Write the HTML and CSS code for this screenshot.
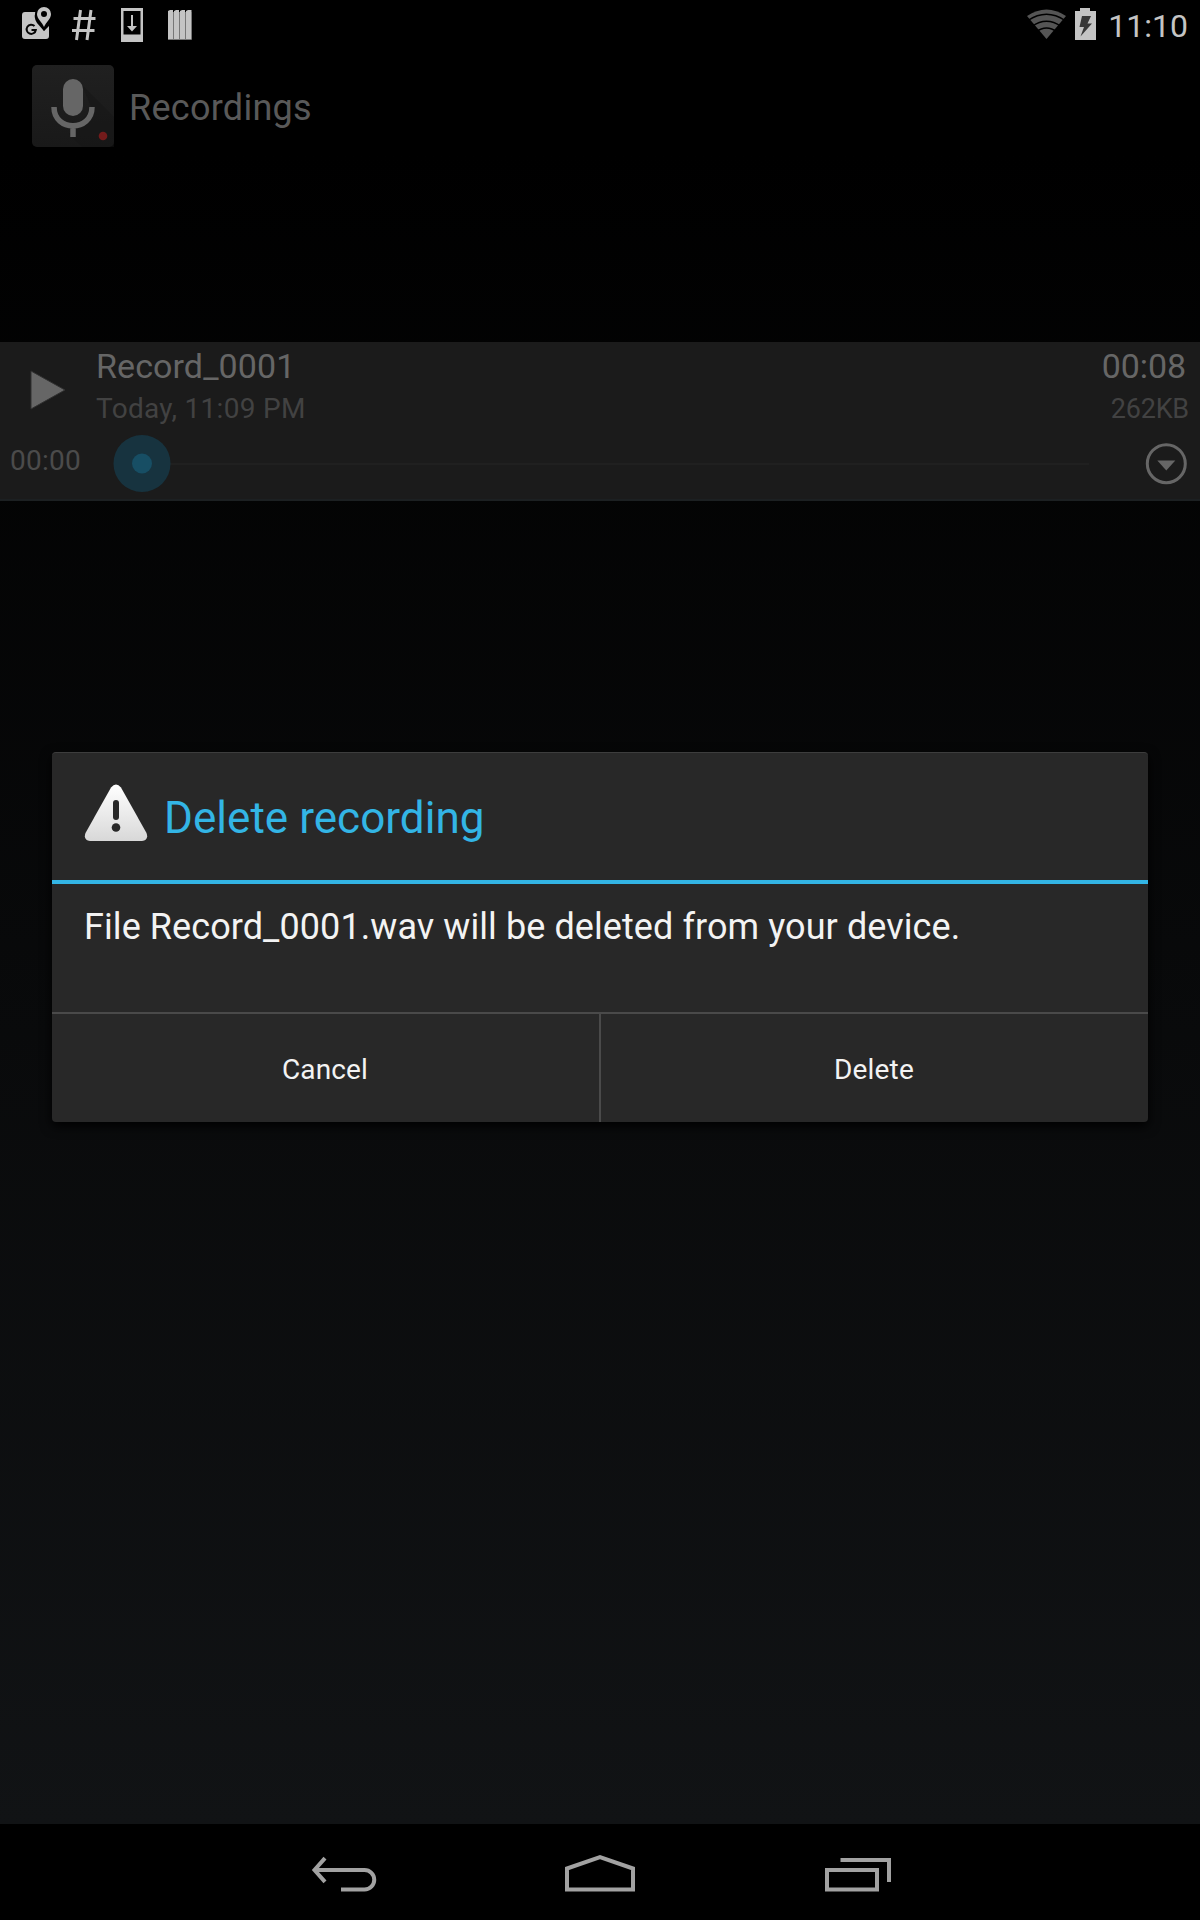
FILE: index.html
```html
<!DOCTYPE html>
<html lang="en">
<head>
<meta charset="utf-8">
<title>Recordings</title>
<link rel="stylesheet" href="styles.css">
</head>
<body>
<div class="screen">
  <header class="status-bar">
    <svg class="status-icons" width="200" height="50" viewBox="0 0 200 50">
      <g fill="#c4c4c4">
        <path d="M25 12H36Q33 17 37 23L44 31L49 26V36Q49 39 46 39H25Q22 39 22 36V15Q22 12 25 12Z"/>
        <path fill="#000" d="M44 5A9 9 0 0 1 53 14C53 20 48 24 44 31C40 24 35 20 35 14A9 9 0 0 1 44 5Z"/>
        <path fill-rule="evenodd" d="M44 7A7 7 0 0 1 51 14C51 19 46 22 44 27C42 22 37 19 37 14A7 7 0 0 1 44 7ZM44 11A3 3 0 1 0 44 17A3 3 0 1 0 44 11Z"/>
        <path fill-rule="evenodd" d="M121 8H143V42H121ZM123.500 11V34.500H140.500V11Z"/>
        <path d="M131 15H133V26H137L132 31.500L127 26H131Z"/>
        <path d="M168 11L170 10H173V39H168ZM174 11L176 10H179V39H174ZM180 11L182 10H185V39H180ZM186 11L188 10H191.500V39H186Z"/>
      </g>
      <path d="M34.500 26A4.600 4.600 0 1 0 35.800 30H31.500" fill="none" stroke="#050505" stroke-width="2"/>
      <path d="M80.500 10L76.500 40M91 10L87 40M73.500 18.500H95.500M72 30.500H94.500" fill="none" stroke="#c4c4c4" stroke-width="3"/>
      <path d="M168 39.500H191.500V12M173.500 12V39M179.500 12V39M185.500 12V39" fill="none" stroke="#777" stroke-width="1"/>
    </svg>
    <div class="status-right">
      <svg width="72" height="50" viewBox="1026 0 72 50">
        <path d="M1027 16Q1046.500 3 1066 16L1046.500 39Z" fill="#555"/>
        <path d="M1028 20.500Q1046.500 8 1065 20.500M1032 26.500Q1046.500 16 1061 26.500M1036 32Q1046.500 24 1057 32" fill="none" stroke="#000" stroke-width="1.500"/>
        <path d="M1075 11H1080V8H1090V11H1096V40H1075Z" fill="#c4c4c4"/>
        <path d="M1082 16H1091L1087.500 23.500H1092L1080.500 36.500L1084 27H1079.500Z" fill="#383838"/>
      </svg>
      <span class="clock">11:10</span>
    </div>
  </header>
  <div class="action-bar">
    <svg class="app-icon" width="82" height="82" viewBox="0 0 82 82">
      <defs><linearGradient id="tile" x2="0" y2="1"><stop stop-color="#202020"/><stop offset="1" stop-color="#191919"/></linearGradient></defs>
      <rect width="82" height="82" rx="5" fill="url(#tile)"/>
      <path d="M50 20L82 52V82H50L37 69L60 44Z" fill="#151515" opacity=".5"/>
      <rect x="31" y="14" width="20" height="37" rx="10" fill="#666"/>
      <path d="M22 42C22 67 60 67 60 42M41 60V72" fill="none" stroke="#666" stroke-width="5.500"/>
      <circle cx="71" cy="71" r="4.300" fill="#731b1b"/>
    </svg>
    <h1 class="title">Recordings</h1>
  </div>
  <main class="content">
    <section class="recording">
      <div class="summary">
        <svg class="play" width="60" height="60" viewBox="0 0 60 60"><path d="M12 11L46 30L12 49Z" fill="#666" stroke="#303030" stroke-width="1"/></svg>
        <div class="info">
          <div class="name">Record_0001</div>
          <div class="date">Today, 11:09 PM</div>
        </div>
        <div class="meta">
          <div class="name duration">00:08</div>
          <div class="date size">262KB</div>
        </div>
      </div>
      <div class="player">
        <span class="elapsed">00:00</span>
        <svg class="seek" width="980" height="60" viewBox="0 0 980 60">
          <path d="M29 30H976" stroke="#202020" stroke-width="2"/>
          <circle cx="29" cy="29.500" r="28.500" fill="#17333f"/>
          <circle cx="29" cy="29.500" r="10" fill="#174e64"/>
        </svg>
        <svg class="more" width="42" height="42" viewBox="0 0 42 42"><circle cx="21.300" cy="20.700" r="19" fill="none" stroke="#666" stroke-width="3"/><path d="M12.300 17.500H30.300L21.300 27.500Z" fill="#666"/></svg>
      </div>
    </section>
  </main>
  <nav class="nav-bar">
    <svg width="66" height="36" viewBox="311 1856 66 36"><path d="M325 1858.200L314.500 1870L325 1881.800" fill="none" stroke="#a2a2a2" stroke-width="4"/><path d="M315 1870H364.500A9.700 9.700 0 0 1 364.500 1889.500H341" fill="none" stroke="#a2a2a2" stroke-width="4"/></svg>
    <svg width="72" height="36" viewBox="565 1856 72 36" overflow="visible"><path d="M567 1889.500V1868.500L600 1857L633 1868.500V1889.500Z" fill="none" stroke="#a2a2a2" stroke-width="4"/></svg>
    <svg width="68" height="36" viewBox="824 1856 68 36"><path d="M827 1870H877V1889.500H827ZM840.500 1860H889V1882" fill="none" stroke="#a2a2a2" stroke-width="4"/></svg>
  </nav>
  <div class="dialog" role="dialog">
    <div class="dialog-head">
      <svg class="warning" width="64" height="58" viewBox="0 0 64 58">
        <defs><linearGradient id="metal" x2="0" y2="1"><stop stop-color="#fff"/><stop offset="1" stop-color="#d8d8d8"/></linearGradient></defs>
        <path d="M27 3.500Q32-2.500 37 3.500L62.500 49Q65 56 58 57H6Q-1 56 1.500 49Z" fill="url(#metal)"/>
        <rect x="29" y="16" width="6" height="20" rx="3" fill="#282828"/>
        <circle cx="32" cy="43.500" r="4.300" fill="#282828"/>
      </svg>
      <h2 class="dialog-title">Delete recording</h2>
    </div>
    <p class="message">File Record_0001.wav will be deleted from your device.</p>
    <div class="buttons">
      <button>Cancel</button>
      <button>Delete</button>
    </div>
  </div>
</div>
</body>
</html>
```
FILE: styles.css
```css
* { box-sizing: border-box; }
body { margin: 0; background: #000; }
h1, h2, p { margin: 0; font-weight: 400; }
svg { display: block; flex: none; }

.screen {
  position: relative;
  display: flex;
  flex-direction: column;
  width: 1200px;
  height: 1920px;
  font-family: Roboto, "Liberation Sans", sans-serif;
  white-space: nowrap;
  background: linear-gradient(#000 8%, #111315 95%);
  overflow: hidden;
}

.status-bar {
  display: flex;
  justify-content: space-between;
  height: 50px;
  background: #000;
}
.status-right { display: flex; padding-right: 12px; gap: 10px; }
.clock { font-size: 32px; line-height: 52px; color: #c4c4c4; }

.action-bar {
  display: flex;
  gap: 15px;
  height: 114px;
  padding: 15px 32px 0;
}
.title { font-size: 36px; line-height: 87px; letter-spacing: 0.27px; color: #595959; }

.content { flex: 1; padding-top: 178px; }
.recording {
  height: 159px;
  background: #1b1b1b;
  border-bottom: 2px solid #1c2022;
}
.summary { display: flex; height: 92px; }
.play { margin: 18px 17px 0 19px; }
.info { flex: 1; }
.meta { text-align: right; padding-right: 11px; }
.name { height: 50px; font-size: 34px; line-height: 48px; letter-spacing: 0.1px; color: #666; }
.date { height: 36px; font-size: 28px; line-height: 33px; letter-spacing: 0.3px; color: #424242; }
.duration { padding-right: 3px; letter-spacing: -0.1px; }
.size { font-size: 27px; line-height: 35px; letter-spacing: -0.2px; }
.player { display: flex; height: 60px; align-items: center; }
.elapsed { width: 113px; padding-left: 10px; font-size: 28px; line-height: 53px; height: 60px; letter-spacing: 0.25px; color: #4b4b4b; }
.more { margin-left: 52px; }

.nav-bar {
  display: flex;
  height: 96px;
  padding: 32px 308px 0 311px;
  justify-content: space-between;
  align-items: flex-start;
  background: #000;
}

.dialog {
  position: absolute;
  top: 752px;
  left: 52px;
  width: 1096px;
  height: 370px;
  display: flex;
  flex-direction: column;
  background: #282828;
  border-top: 1px solid #3d3d3d;
  border-radius: 4px;
  box-shadow: 0 4px 12px #000;
}
.dialog-head {
  display: flex;
  height: 131px;
  padding: 31px 32px 0;
  gap: 16px;
  border-bottom: 4px solid #33b5e5;
}
.dialog-title { font-size: 44px; line-height: 68px; letter-spacing: 0.04px; color: #33b5e5; }
.message { flex: 1; padding: 19px 32px 0; font-size: 36px; line-height: 48px; letter-spacing: 0.08px; color: #f3f3f3; }
.buttons { display: flex; height: 110px; border-top: 2px solid #4a4a4a; }
.buttons button {
  flex: 1;
  padding: 3px 1px 0 0;
  border: 0;
  background: none;
  font: 28px/34px Roboto, "Liberation Sans", sans-serif;
  letter-spacing: 0.15px;
  color: #f3f3f3;
}
.buttons button + button { border-left: 2px solid #4a4a4a; }
```
